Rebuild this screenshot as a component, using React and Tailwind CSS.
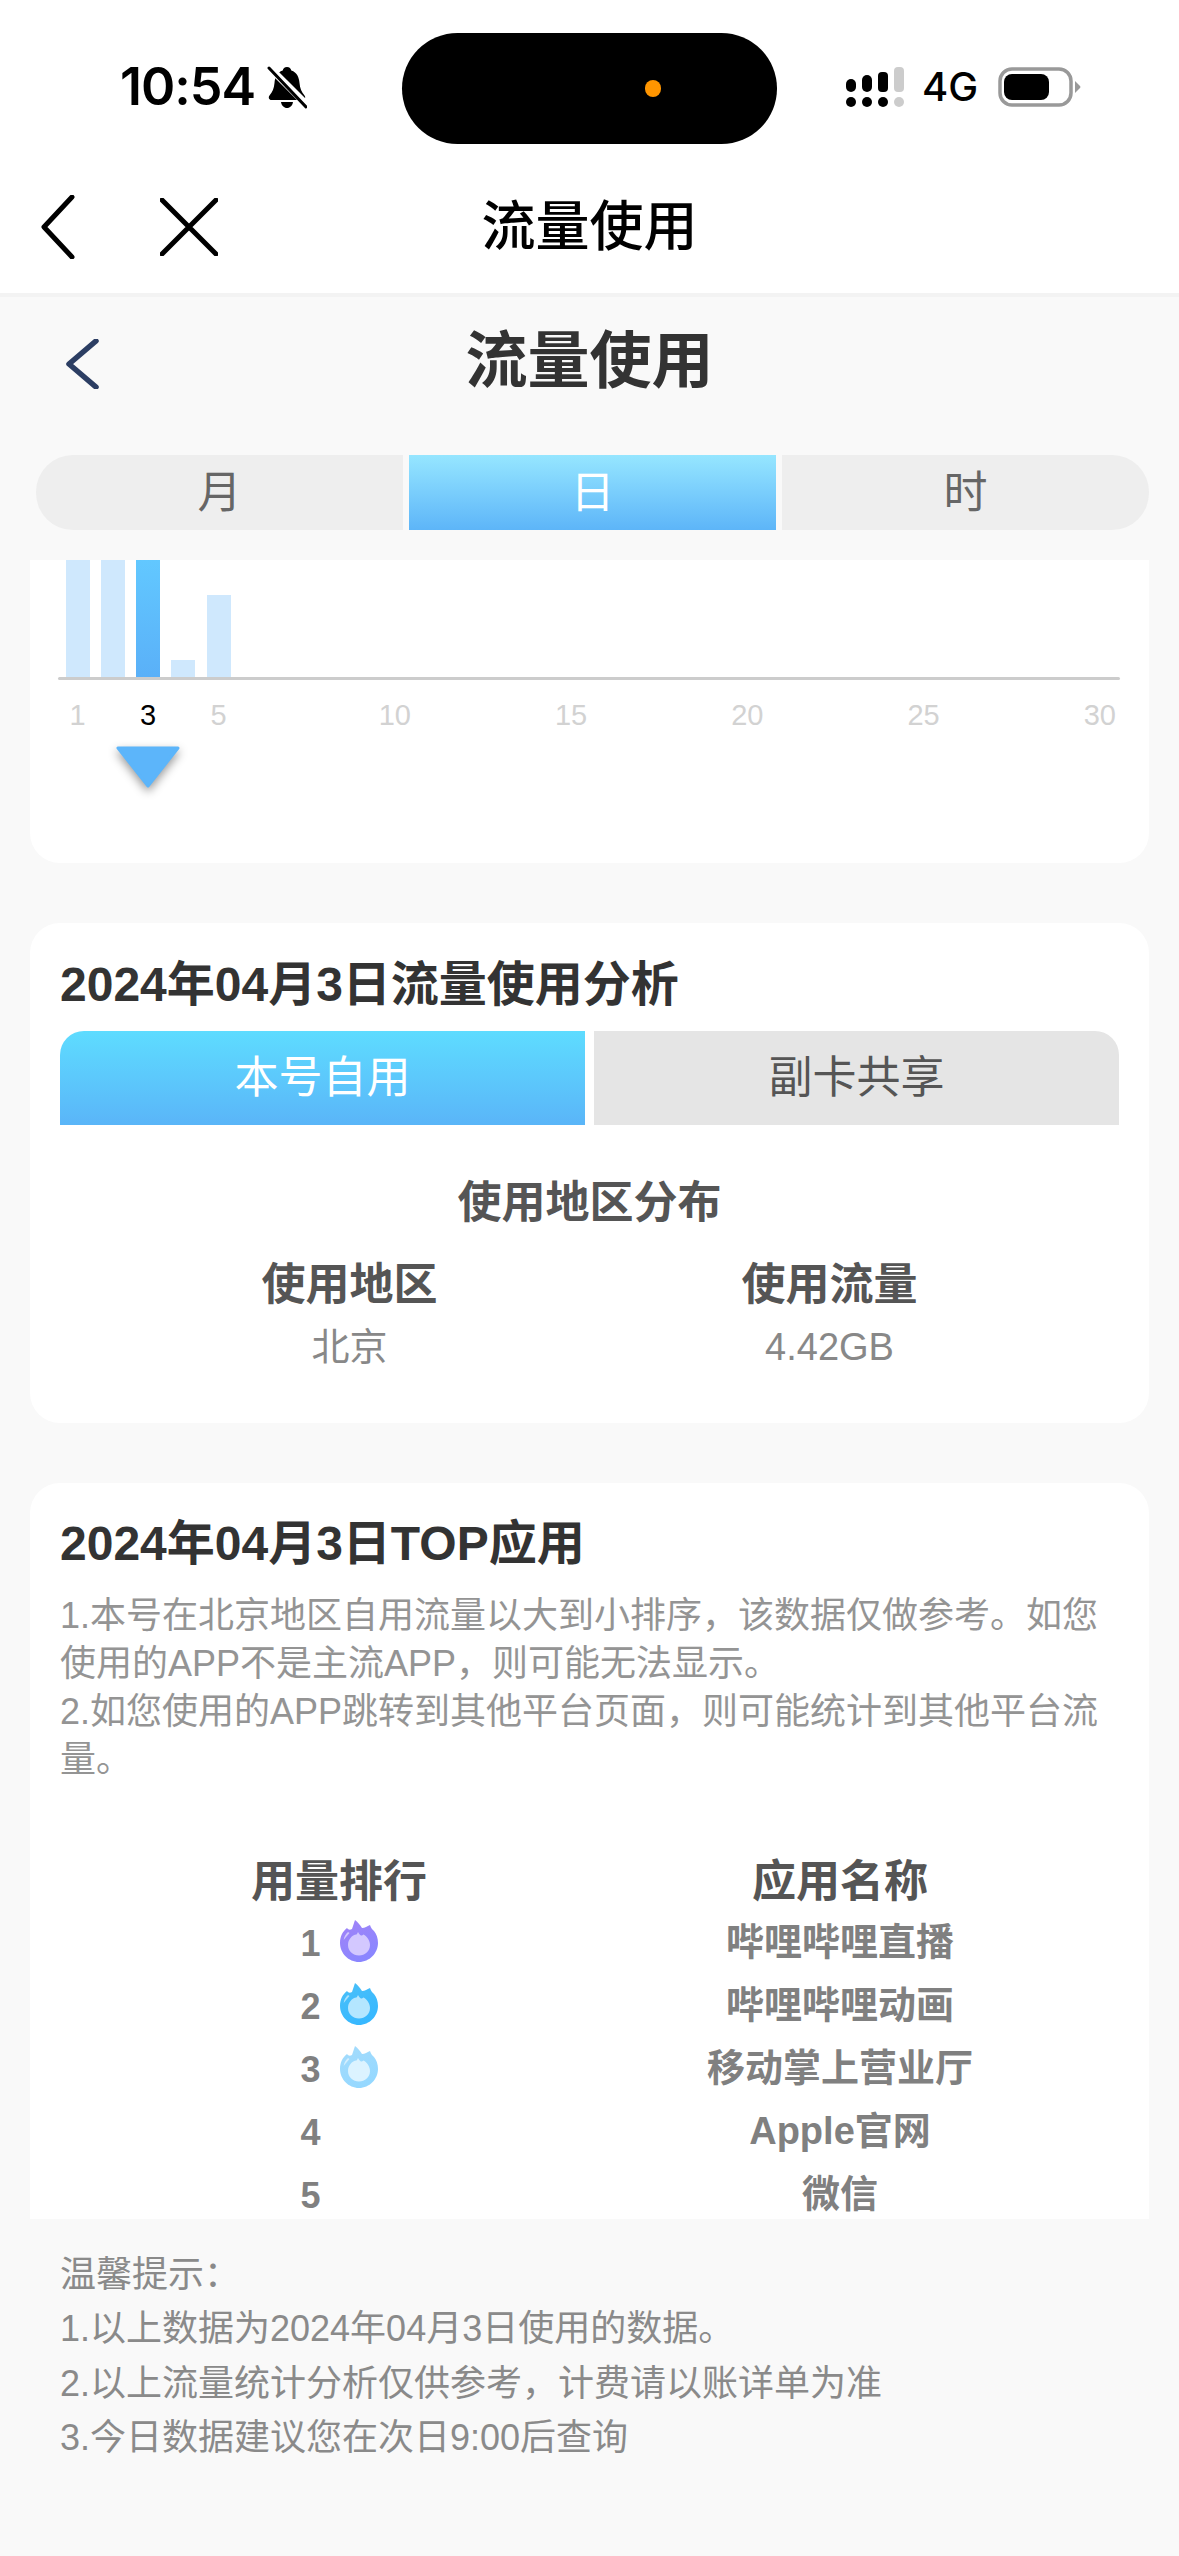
import React from "react";

const sans = "font-['Liberation_Sans','Noto_Sans_CJK_SC',sans-serif]";

function Bell() {
  return (
    <svg width="40" height="43" viewBox="0 0 40 43" className="ml-[12px] shrink-0">
      <path d="M20 1c2.500 0 4 1.600 4.300 3.600C30 6.400 32 11.500 32.500 17c.5 5.500 2 9 5 12.500 1.500 2 .5 4.500-2 4.500H4.500c-2.500 0-3.500-2.500-2-4.500C5.500 26 7 22.500 7.500 17 8 11.500 10 6.400 15.700 4.600 16 2.600 17.500 1 20 1z" fill="#000" />
      <path d="M14 36h12c-.5 3.500-3 6-6 6s-5.500-2.500-6-6z" fill="#000" />
      <path d="M2 1 L40 39" stroke="#fff" strokeWidth="7" />
      <path d="M2 2 L39 41" stroke="#000" strokeWidth="3" strokeLinecap="round" />
    </svg>
  );
}

function Signal() {
  return (
    <svg width="58" height="40" viewBox="0 0 58 40">
      <rect x="0" y="12" width="10" height="13" rx="5" fill="#000" />
      <rect x="16" y="8" width="10" height="17" rx="5" fill="#000" />
      <rect x="32" y="5" width="10" height="20" rx="4" fill="#000" />
      <rect x="48" y="0" width="10" height="25" rx="4" fill="#ccc" />
      <rect x="0" y="30" width="10" height="10" rx="5" fill="#000" />
      <rect x="16" y="30" width="10" height="10" rx="5" fill="#000" />
      <rect x="32" y="30" width="10" height="10" rx="5" fill="#000" />
      <rect x="48" y="30" width="10" height="10" rx="5" fill="#ccc" />
    </svg>
  );
}

function Battery() {
  return (
    <svg width="83" height="40" viewBox="0 0 83 40">
      <rect x="2" y="2" width="71" height="36" rx="12" fill="none" stroke="#999" strokeWidth="3.500" />
      <rect x="6" y="7" width="45" height="26" rx="8" fill="#000" />
      <path d="M77 14 L82 19 Q83 20 82 21 L77 26 Z" fill="#999" />
    </svg>
  );
}

function StatusBar() {
  return (
    <div className="h-[144px] flex items-start">
      <div className="w-[402px] mt-[60px] h-[54px] pl-[120px] flex items-center font-['Inter',sans-serif] font-semibold text-[52px] leading-[54px] text-black">
        <span className="tracking-[-1px]">10:54</span>
        <Bell />
      </div>
      <div className="mt-[33px] w-[375px] h-[111px] rounded-[56px] bg-black flex items-center pl-[243px]">
        <div className="w-[16px] h-[17px] rounded-full bg-[#ff9500]" />
      </div>
      <div className="ml-[69px] mt-[67px] h-[40px] flex items-center">
        <Signal />
        <span className="ml-[18px] w-[56px] font-['Inter',sans-serif] font-medium text-[40px] leading-[40px] text-black">4G</span>
        <span className="ml-[20px] flex"><Battery /></span>
      </div>
    </div>
  );
}

function NavBar() {
  return (
    <div className="relative h-[153px] border-b-[4px] border-[#f3f3f3] bg-white">
      <div className="flex items-start pt-[51px] pl-[41px]">
        <svg width="34" height="64" viewBox="0 0 34 64" fill="none">
          <path d="M31 2 L3 32 L31 62" stroke="#000" strokeWidth="5" strokeLinecap="round" strokeLinejoin="round" />
        </svg>
        <svg width="58" height="58" viewBox="0 0 58 58" fill="none" className="ml-[85px] mt-[3px]">
          <path d="M2 2 L56 56 M56 2 L2 56" stroke="#000" strokeWidth="5" strokeLinecap="round" />
        </svg>
      </div>
      <div className="absolute left-0 right-0 top-[50px] text-center text-[54px] leading-[66px] font-medium text-black">流量使用</div>
    </div>
  );
}

function SubHeader() {
  return (
    <div className="relative h-[158px]">
      <svg width="34" height="50" viewBox="0 0 34 50" fill="none" className="absolute left-[65px] top-[42px]">
        <path d="M31 2 L4 25 L31 48" stroke="#2c3e63" strokeWidth="5.500" strokeLinecap="round" strokeLinejoin="round" />
      </svg>
      <div className="text-center pt-[30px] text-[62px] leading-[70px] font-bold text-[#333]">流量使用</div>
    </div>
  );
}

function PeriodTabs() {
  return (
    <div className="ml-[36px] mr-[30px] h-[75px] flex gap-[6px] text-[44px] leading-[75px] text-center">
      <div className="flex-1 bg-[#eeeeee] text-[#666] rounded-l-[37px]">月</div>
      <div className="flex-1 bg-gradient-to-b from-[#96e6ff] to-[#5db5f8] text-white">日</div>
      <div className="flex-1 bg-[#eeeeee] text-[#666] rounded-r-[37px]">时</div>
    </div>
  );
}

const bars = [117, 117, 117, 17, 82];
const labels = { 1: "1", 3: "3", 5: "5", 10: "10", 15: "15", 20: "20", 25: "25", 30: "30" };

function ChartCard() {
  const days = Array.from({ length: 30 }, (_, i) => i + 1);
  return (
    <div className="h-[303px] bg-white rounded-b-[30px] shrink-0 pl-[30px]">
      <div className="h-[117px] grid grid-cols-[repeat(30,35.25px)] items-end">
        {bars.map((h, i) => (
          <div key={i} className="flex justify-center">
            <div
              className={i === 2 ? "w-[24px] bg-gradient-to-b from-[#62c8ff] to-[#5ab0f8]" : "w-[24px] bg-[#cfe8fd]"}
              style={{ height: h }}
            />
          </div>
        ))}
      </div>
      <div className="-ml-[2px] w-[1062px] h-[3px] bg-[#cccccc] rounded-full" />
      <div className="mt-[18px] grid grid-cols-[repeat(30,35.25px)] text-[29px] leading-[34px] text-center">
        {days.map((d) => (
          <div key={d} className={d === 3 ? "text-black flex justify-center" : "text-[#d2d2d2] flex justify-center"}>
            {labels[d] || ""}
          </div>
        ))}
      </div>
      <div className="mt-[14px] grid grid-cols-[repeat(30,35.25px)]">
        <div className="col-start-3 flex justify-center">
          <svg width="66" height="42" viewBox="0 0 66 42" className="shrink-0 overflow-visible drop-shadow-[0_4px_5px_rgba(0,0,0,0.4)]">
            <path d="M3 2 H63 L33 40 Z" fill="#5cb5fa" stroke="#5cb5fa" strokeWidth="3" strokeLinejoin="round" />
          </svg>
        </div>
      </div>
    </div>
  );
}

function AnalysisCard() {
  return (
    <div className="h-[500px] bg-white rounded-[30px] shrink-0 px-[30px] pt-[32px]">
      <div className="text-[48px] leading-[60px] font-bold text-[#333]">2024年04月3日流量使用分析</div>
      <div className="mt-[16px] flex gap-[9px] h-[94px] text-[44px] leading-[93px] text-center">
        <div className="flex-1 rounded-tl-[24px] bg-gradient-to-b from-[#5edcff] to-[#5ab5f8] text-white">本号自用</div>
        <div className="flex-1 rounded-tr-[24px] bg-[#e5e5e5] text-[#555]">副卡共享</div>
      </div>
      <div className="mt-[48px] text-center text-[44px] leading-[60px] font-semibold text-[#555]">使用地区分布</div>
      <div className="mt-[22px] grid grid-cols-[480px_480px] justify-center text-center">
        <div className="text-[44px] leading-[60px] font-semibold text-[#555]">使用地区</div>
        <div className="text-[44px] leading-[60px] font-semibold text-[#555]">使用流量</div>
        <div className="mt-[7px] text-[38px] leading-[50px] text-[#888]">北京</div>
        <div className="mt-[7px] text-[38px] leading-[50px] text-[#888]">4.42GB</div>
      </div>
    </div>
  );
}

function Flame({ id, from, to, inner }) {
  return (
    <svg width="38" height="42" viewBox="0 0 38 42">
      <defs>
        <linearGradient id={id} x1="0" y1="0" x2="0.5" y2="1">
          <stop offset="0" stopColor={from} />
          <stop offset="1" stopColor={to} />
        </linearGradient>
      </defs>
      <path
        d="M15 0 C18 2 20 5 22 8 C25 8 27 6 30 5 C31 8 32 9 34 11 C36.500 14 38 18 38 23 C38 33 29.500 42 19 42 C8.500 42 0 33 0 23 C0 16 3 11 7 8 C8.500 10 10 10 12 9 C13 6 14 3 15 0 Z"
        fill={`url(#${id})`}
      />
      <path d="M8 12 C5.500 14 4 17 3.700 20 C5.500 18 7.500 15 9.500 13 Z" fill="#fff" opacity="0.55" />
      <path
        d="M18 12 C19 14 20 15 21 15.500 C22 15.500 23 15 23.500 14.500 C27 16.500 30 20.500 30 25 C30 31 25 35.500 19 35.500 C13 35.500 8 31 8 25 C8 19.500 12 15 16.500 14.500 C17 14 17.500 13 18 12 Z"
        fill={inner}
      />
    </svg>
  );
}

const rows = [
  { n: 1, name: "哔哩哔哩直播", flame: { id: "f1", from: "#a283f7", to: "#8a86ff", inner: "#d3c8ff" } },
  { n: 2, name: "哔哩哔哩动画", flame: { id: "f2", from: "#4cc0f8", to: "#37b8ff", inner: "#b4e6ff" } },
  { n: 3, name: "移动掌上营业厅", flame: { id: "f3", from: "#a5dcfc", to: "#95d8ff", inner: "#dcf3ff" } },
  { n: 4, name: "Apple官网" },
  { n: 5, name: "微信" },
];

function TopCard() {
  return (
    <div className="bg-white rounded-t-[30px] shrink-0 px-[30px] pt-[31px] h-[760px]">
      <div className="text-[48px] leading-[60px] font-bold text-[#333]">2024年04月3日TOP应用</div>
      <div className="mt-[18px] text-[36px] leading-[48px] text-[#949494]">
        <div>1.本号在北京地区自用流量以大到小排序，该数据仅做参考。如您使用的APP不是主流APP，则可能无法显示。</div>
        <div>2.如您使用的APP跳转到其他平台页面，则可能统计到其他平台流量。</div>
      </div>
      <div className="mt-[68px] grid grid-cols-[501px_501px] justify-center text-center">
        <div className="text-[44px] leading-[60px] font-semibold text-[#555]">用量排行</div>
        <div className="text-[44px] leading-[60px] font-semibold text-[#555]">应用名称</div>
        {rows.map((r) => (
          <React.Fragment key={r.n}>
            <div className="h-[63px] flex items-center justify-center gap-[19px] text-[36px] font-bold text-[#808080]">
              <span className="w-[20px]">{r.n}</span>
              <span className="w-[38px] h-[42px] flex -translate-y-[3px]">{r.flame ? <Flame {...r.flame} /> : null}</span>
            </div>
            <div className="h-[63px] text-[38px] leading-[60px] font-semibold text-[#808080]">{r.name}</div>
          </React.Fragment>
        ))}
      </div>
    </div>
  );
}

export default function App() {
  return (
    <div className={`${sans} w-[1179px] h-[2556px] overflow-hidden bg-[#f9f9f9] flex flex-col`}>
      <div className="bg-white">
        <StatusBar />
        <NavBar />
      </div>
      <SubHeader />
      <PeriodTabs />
      <div className="mt-[30px] mx-[30px] h-[1659px] overflow-hidden flex flex-col gap-[60px]">
        <ChartCard />
        <AnalysisCard />
        <TopCard />
      </div>
      <div className="pt-[29px] px-[60px] text-[36px] leading-[54.300px] text-[#8a8a8a]">
        <div>温馨提示：</div>
        <div>1.以上数据为2024年04月3日使用的数据。</div>
        <div>2.以上流量统计分析仅供参考，计费请以账详单为准</div>
        <div>3.今日数据建议您在次日9:00后查询</div>
      </div>
    </div>
  );
}
